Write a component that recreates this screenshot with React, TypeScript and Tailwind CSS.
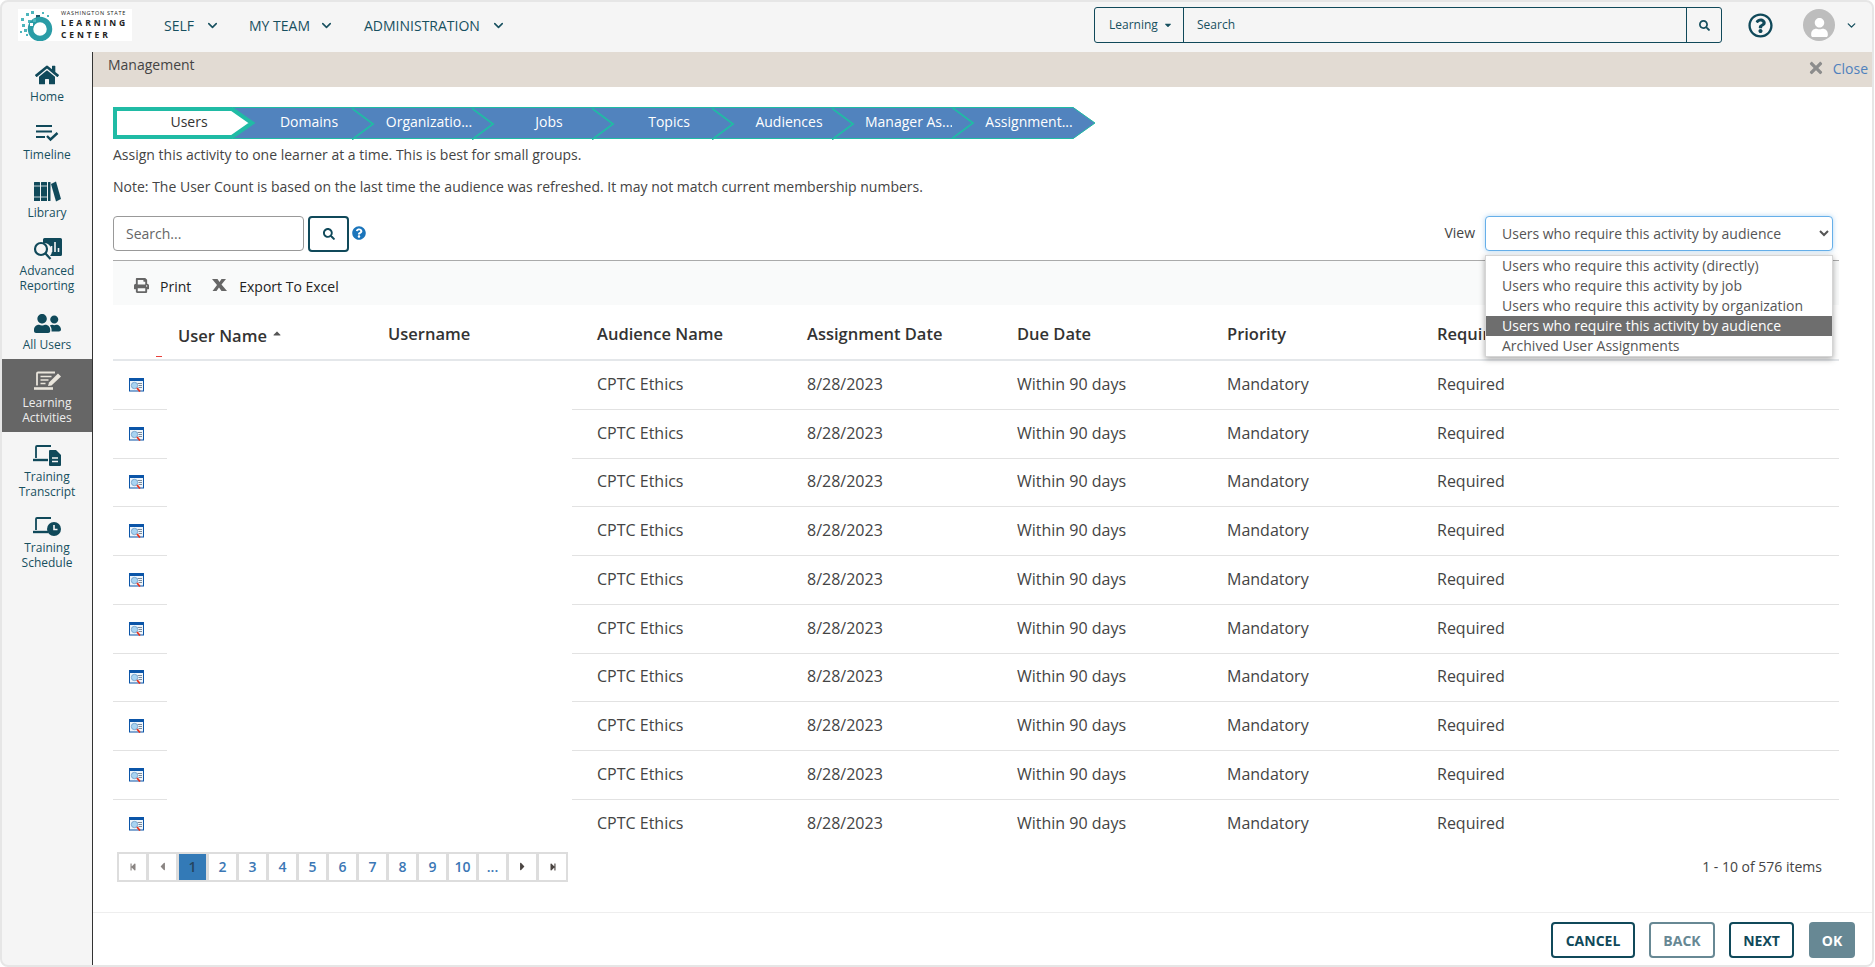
import { ReactNode } from "react";
import { ChevronDown } from "lucide-react";
import { FaCaretDown, FaCaretLeft, FaCaretRight, FaHome, FaPrint, FaQuestionCircle, FaRegQuestionCircle, FaSearch, FaStepBackward, FaStepForward, FaTimes, FaUser, FaUserFriends } from "react-icons/fa";

const DARK = "#10495a";

function LogoMark() {
    const dots = [[3, 9, 3], [8, 4, 3], [13, 2, 3], [18, 6, 4], [24, 3, 2], [29, 6, 2], [4, 15, 3], [10, 11, 3], [15, 11, 3], [2, 22, 2], [6, 20, 3], [11, 17, 3], [8, 25, 2]];
    return (
        <svg width="38" height="32" viewBox="0 0 38 32" className="shrink-0">
            {dots.map(([x, y, s], i) => (
                <rect key={i} x={x} y={y} width={s} height={s} fill={i === 3 ? "#1d5a6b" : "#4db6bd"} />
            ))}
            <circle cx="22" cy="20" r="9.5" fill="none" stroke="#2a9ca6" strokeWidth="5.500" />
            <rect x="12" y="14" width="3" height="3" fill="#ffffff" />
            <rect x="15" y="10" width="3" height="3" fill="#4db6bd" />
        </svg>
    );
}

function TimelineIcon() {
    return (
        <svg width="24" height="18" viewBox="0 0 24 18" fill="none" stroke={DARK} strokeWidth="2.2">
            <path d="M1 2h16M1 7.500h16M1 13h9" />
            <path d="M12 12l3.500 3.500L22.500 9" strokeWidth="2.400" />
        </svg>
    );
}

function LibraryIcon() {
    return (
        <svg width="28" height="21" viewBox="0 0 28 21" fill={DARK}>
            <rect x="1" y="1" width="6" height="19" rx="0.500" />
            <rect x="8" y="1" width="6" height="19" rx="0.500" />
            <rect x="15" y="1" width="2.500" height="19" rx="0.500" />
            <path d="M18 3l5-2.500 5 17.500-5 2.500z" />
            <path d="M1 5h6M8 5h6M1 16h6M8 16h6" stroke="#f5f5f5" strokeWidth="0.800" />
        </svg>
    );
}

function ReportingIcon() {
    return (
        <svg width="29" height="22" viewBox="0 0 29 22" fill="none">
            <path d="M10 1.500a1.500 1.500 0 011.500-1.500H27.500A1.500 1.500 0 0129 1.500v15a1.500 1.500 0 01-1.500 1.500H17a8 8 0 00-7-13z" fill={DARK} />
            <path d="M18.500 14V8M22 14V4M25.500 14v-4" stroke="#f5f5f5" strokeWidth="1.600" />
            <circle cx="8" cy="11" r="6" stroke={DARK} strokeWidth="2.200" />
            <path d="M12.500 15.500l5 5.500" stroke={DARK} strokeWidth="2.200" />
        </svg>
    );
}

function ActivitiesIcon() {
    const c = "#e9e5dc";
    return (
        <svg width="29" height="20" viewBox="0 0 29 20" fill="none" stroke={c}>
            <path d="M4 14.500V2.500a1 1 0 011-1h17" strokeWidth="1.800" />
            <path d="M1 17.500h19" strokeWidth="2.600" />
            <path d="M7.500 5.500h11M7.500 9h8M7.500 12.500h5" strokeWidth="1.600" />
            <path d="M15 15l1-3.500L25 2.500l3 3-9.500 9z" fill={c} stroke="none" />
        </svg>
    );
}

function TranscriptIcon() {
    return (
        <svg width="28" height="21" viewBox="0 0 28 21" fill="none" stroke={DARK}>
            <path d="M3 13V2a1 1 0 011-1h14" strokeWidth="1.800" />
            <path d="M0 15h15" strokeWidth="2.400" />
            <path d="M16 6a1 1 0 011-1h6l5 5v10a1 1 0 01-1 1H17a1 1 0 01-1-1z" fill={DARK} stroke="none" />
            <path d="M19 13h6M19 16.500h6" stroke="#f5f5f5" strokeWidth="1.400" />
        </svg>
    );
}

function ScheduleIcon() {
    return (
        <svg width="28" height="19" viewBox="0 0 28 19" fill="none" stroke={DARK}>
            <path d="M3 13V2a1 1 0 011-1h14" strokeWidth="1.800" />
            <path d="M0 15h15" strokeWidth="2.400" />
            <circle cx="21" cy="12" r="7" fill={DARK} stroke="none" />
            <path d="M21 8v4.500h3.500" stroke="#f5f5f5" strokeWidth="1.600" />
        </svg>
    );
}

function DetailsIcon() {
    return (
        <svg width="15" height="14" viewBox="0 0 15 14" className="block">
            <rect x="0.500" y="0.500" width="14" height="12.500" fill="#eef5fb" stroke="#0b55a8" />
            <rect x="0" y="0" width="15" height="3" fill="#0b55a8" />
            <path d="M8.500 5.500h4.500M9.500 7.500h3.500M9.500 9.500h3.500" stroke="#7c8a9a" strokeWidth="1" />
            <circle cx="5.500" cy="7.500" r="3.200" fill="#a9d4f2" stroke="#6f9cc6" strokeWidth="0.800" />
            <path d="M8 10l3 3.500" stroke="#e8321e" strokeWidth="1.800" />
        </svg>
    );
}

function ExcelIcon() {
    return (
        <svg width="15" height="12" viewBox="0 0 15 12" fill="#666666" className="block">
            <path d="M0 0h5.500l2 3 2-3H14L9.500 5.500 15 12H9.500L7 8.500 4.500 12H0.500l4.500-6z" />
        </svg>
    );
}

function NavItem({ icon, lines, className, active }: { icon: ReactNode; lines: string[]; className: string; active?: boolean }) {
    return (
        <div className={`flex flex-col items-center text-[12px] leading-[15px] ${active ? "bg-[#666666] text-[#eeeeee]" : "text-[#17505f]"} ${className}`}>
            <div className="flex h-6 items-center justify-center">{icon}</div>
            <div className="mt-[2px] text-center">
                {lines.map((l) => (
                    <div key={l}>{l}</div>
                ))}
            </div>
        </div>
    );
}

function StepLabel({ label }: { label: string }) {
    return <div className="relative z-[1] flex h-full items-center justify-center whitespace-nowrap pb-[3px] pl-[32px] text-[14px]">{label}</div>;
}

function StepSeam() {
    return (
        <svg width="24" height="32" viewBox="0 0 24 32" className="absolute left-[-1px] top-0 z-[1]">
            <path d="M0 0.500L21 16 0 31.500" fill="#5183be" stroke="#20bba5" strokeWidth="1.800" />
        </svg>
    );
}

function PageButton({ children, active, dim }: { children: ReactNode; active?: boolean; dim?: boolean }) {
    return (
        <div
            className={`-ml-px flex h-[30px] w-[31px] items-center justify-center border-2 border-[#dddddd] text-[14px] font-semibold first:ml-0 ${
                active ? "bg-[#337ab7] font-normal text-[#24455f]" : dim ? "text-[#8a8583]" : "text-[#3b77b5]"
            }`}
        >
            {children}
        </div>
    );
}

const COLS = "grid grid-cols-[54px_195px_210px_210px_210px_210px_210px_1fr]";

function Row({ last }: { last?: boolean }) {
    const line = last ? "" : "border-b border-[#e2e2e2]";
    const cell = `flex items-center pb-[2px] pl-[25px] ${line}`;
    return (
        <div className={`${COLS} h-[48.75px] text-[16px] text-[#444444]`}>
            <div className={`flex items-center pl-4 ${line}`}>
                <DetailsIcon />
            </div>
            <div />
            <div />
            <div className={cell}>CPTC Ethics</div>
            <div className={cell}>8/28/2023</div>
            <div className={cell}>Within 90 days</div>
            <div className={cell}>Mandatory</div>
            <div className={cell}>Required</div>
        </div>
    );
}

export default function App() {
    const views = [
        "Users who require this activity (directly)",
        "Users who require this activity by job",
        "Users who require this activity by organization",
        "Users who require this activity by audience",
        "Archived User Assignments",
    ];
    const steps = ["Domains", "Organizatio...", "Jobs", "Topics", "Audiences", "Manager As..."];

    return (
        <div className="h-[967px] w-full bg-white font-['Open_Sans',sans-serif]">
            <div className="flex h-full w-[1874px] flex-col overflow-hidden rounded-lg border-2 border-[#e6e6e6] bg-[#f5f5f5]">
                {/* top bar */}
                <div className="flex h-[50px] shrink-0 items-center pb-1 text-[#17505f]">
                    <div className="ml-[16px] flex h-8 w-[114px] shrink-0 items-center overflow-hidden bg-white">
                        <LogoMark />
                        <div className="ml-[5px] whitespace-nowrap text-[#222222]">
                            <div className="text-[5.5px] leading-[8px] tracking-[0.7px]">WASHINGTON STATE</div>
                            <div className="text-[8.5px] font-bold leading-[12px] tracking-[2.9px]">LEARNING</div>
                            <div className="text-[8.5px] font-bold leading-[12px] tracking-[2.9px]">CENTER</div>
                        </div>
                    </div>
                    <div className="ml-[32px] flex items-center text-[14px]">
                        <span>SELF</span>
                        <ChevronDown size={15} strokeWidth={2.5} className="ml-[11px]" />
                        <span className="ml-[29px]">MY TEAM</span>
                        <ChevronDown size={15} strokeWidth={2.5} className="ml-[9px]" />
                        <span className="ml-[30px]">ADMINISTRATION</span>
                        <ChevronDown size={15} strokeWidth={2.5} className="ml-[11px]" />
                    </div>
                    <div className="ml-auto flex h-[36px] w-[628px] items-center rounded-[3px] border border-[#10495a] text-[12px]">
                        <div className="flex h-full w-[89px] items-center border-r border-[#10495a] pl-[14px]">
                            Learning
                            <FaCaretDown size={10} className="ml-[5px]" />
                        </div>
                        <div className="flex-1 pl-[13px]">Search</div>
                        <div className="flex h-full w-[35px] items-center justify-center border-l border-[#10495a]">
                            <FaSearch size={11} />
                        </div>
                    </div>
                    <FaRegQuestionCircle size={25} className="ml-[26px] text-[#10495a]" />
                    <div className="ml-[30px] flex h-8 w-8 items-end justify-center overflow-hidden rounded-full bg-[#bdbdbd]">
                        <FaUser size={19} className="mb-[4px] text-white" />
                    </div>
                    <ChevronDown size={13} strokeWidth={2.5} className="ml-[10px] mr-[14px]" />
                </div>

                <div className="flex min-h-0 flex-1">
                    {/* left nav */}
                    <div className="flex w-[91px] shrink-0 flex-col border-r border-[#333333] pt-[11px]">
                        <NavItem icon={<FaHome size={24} color={DARK} />} lines={["Home"]} className="h-[58px]" />
                        <NavItem icon={<TimelineIcon />} lines={["Timeline"]} className="h-[58px]" />
                        <NavItem icon={<LibraryIcon />} lines={["Library"]} className="h-[58px]" />
                        <NavItem icon={<ReportingIcon />} lines={["Advanced", "Reporting"]} className="h-[74px]" />
                        <NavItem icon={<FaUserFriends size={27} color={DARK} />} lines={["All Users"]} className="h-[48px]" />
                        <NavItem icon={<ActivitiesIcon />} lines={["Learning", "Activities"]} className="h-[73px] pt-[10px]" active />
                        <NavItem icon={<TranscriptIcon />} lines={["Training", "Transcript"]} className="h-[73px] pt-[11px]" />
                        <NavItem icon={<ScheduleIcon />} lines={["Training", "Schedule"]} className="pt-[9px]" />
                    </div>

                    <div className="flex min-w-0 flex-1 flex-col bg-white">
                        {/* title strip */}
                        <div className="flex h-[35px] shrink-0 justify-between bg-[#e2dbd3] pl-[15px] pr-[4px] text-[14px] text-[#444444]">
                            <span className="mt-[2px]">Management</span>
                            <span className="mt-[6px] flex h-5 items-center text-[#4f81bd]">
                                <FaTimes size={18} className="mr-[8px] text-[#8c8c8c]" />
                                Close
                            </span>
                        </div>

                        <div className="flex-1 pl-[20px] pr-[33px]">
                            {/* wizard steps */}
                            <div className="mt-5 flex">
                                <div className="relative z-10 h-8 w-[120px] text-[#333333]">
                                    <svg width="144" height="32" viewBox="0 0 144 32" className="absolute left-0 top-0">
                                        <path d="M2 2H119L139 16 119 30H2z" fill="#ffffff" stroke="#20bba5" strokeWidth="4" />
                                    </svg>
                                    <StepLabel label="Users" />
                                </div>
                                {steps.map((s, i) => (
                                    <div key={s} className="relative h-8 w-[120px] border-y border-[#20bba5] bg-[#5183be] text-white">
                                        <StepLabel label={s} />
                                        {i > 0 && <StepSeam />}
                                    </div>
                                ))}
                                <div className="relative h-8 w-[120px] text-white">
                                    <svg width="144" height="32" viewBox="0 0 144 32" className="absolute left-0 top-0">
                                        <path d="M0 0H120L142 16 120 32H0z" fill="#5183be" />
                                        <path d="M0 0.500H120L142 16 120 31.500H0" fill="none" stroke="#20bba5" strokeWidth="1" />
                                    </svg>
                                    <StepSeam />
                                    <StepLabel label="Assignment..." />
                                </div>
                            </div>

                            <p className="mt-[6px] text-[14px] leading-5 text-[#444444]">Assign this activity to one learner at a time. This is best for small groups.</p>
                            <p className="mt-3 text-[14px] leading-5 text-[#444444]">Note: The User Count is based on the last time the audience was refreshed. It may not match current membership numbers.</p>

                            {/* filter row */}
                            <div className="mt-[19px] flex h-9 items-start">
                                <input placeholder="Search..." className="h-[35px] w-[191px] rounded-[4px] border border-[#999999] px-3 text-[14px] outline-none placeholder:text-[#666666]" />
                                <button className="ml-[4px] flex h-9 w-[41px] items-center justify-center rounded-[4px] border-2 border-[#10495a] text-[#10495a]">
                                    <FaSearch size={12} />
                                </button>
                                <FaQuestionCircle size={14} className="ml-[3px] mt-[10px] text-[#1b75bb]" />
                                <span className="ml-auto mt-[6px] text-[14px] text-[#444444]">View</span>
                                <div className="relative ml-[10px] mr-[6px] w-[348px]">
                                    <select defaultValue={views[3]} className="h-[35px] w-full rounded-[4px] border border-[#66afe9] bg-white pl-[12px] text-[14px] text-[#555555] shadow-[0_0_5px_rgba(102,175,233,0.5)] outline-none">
                                        {views.map((v) => (
                                            <option key={v}>{v}</option>
                                        ))}
                                    </select>
                                    <div className="absolute left-0 top-[39px] z-20 w-full border border-[#d5d5d5] bg-white text-[14px] leading-5 text-[#555555] shadow-[0_2px_6px_rgba(0,0,0,0.35)]">
                                        {views.map((v, i) => (
                                            <div key={v} className={`pl-[16px] ${i === 3 ? "bg-[#6e6e6e] text-white" : ""}`}>
                                                {v}
                                            </div>
                                        ))}
                                    </div>
                                </div>
                            </div>

                            {/* toolbar */}
                            <div className="mt-2 flex h-[45px] items-center border-t border-[#aaaaaa] bg-[#f9fafa] pl-[21px] pt-[7px] text-[14px] font-medium text-[#222222]">
                                <FaPrint size={15} className="-mt-[3px] text-[#666666]" />
                                <span className="ml-[11px]">Print</span>
                                <span className="-mt-[3px] ml-[21px]"><ExcelIcon /></span>
                                <span className="ml-[12px]">Export To Excel</span>
                            </div>

                            {/* grid header */}
                            <div className={`${COLS} h-[56px] border-b-2 border-[#e4e7ea] text-[16.5px] font-semibold text-[#333333]`}>
                                <div className="relative">
                                    <span className="absolute left-[43px] top-[51px] h-px w-[6px] bg-[#e8413b]" />
                                </div>
                                <div className="flex pl-[11px] pt-[19px]">
                                    User Name
                                    <FaCaretDown size={12} className="ml-[4px] mt-[4px] rotate-180 text-[#555555]" />
                                </div>
                                <div className="pl-[26px] pt-[17px]">Username</div>
                                <div className="pl-[25px] pt-[17px]">Audience Name</div>
                                <div className="pl-[25px] pt-[17px]">Assignment Date</div>
                                <div className="pl-[25px] pt-[17px]">Due Date</div>
                                <div className="pl-[25px] pt-[17px]">Priority</div>
                                <div className="pl-[25px] pt-[17px]">Required</div>
                            </div>

                            {Array.from({ length: 10 }).map((_, i) => (
                                <Row key={i} last={i === 9} />
                            ))}

                            {/* pager */}
                            <div className="mt-[3px] flex items-center pl-[4px]">
                                <div className="flex">
                                    <PageButton dim><FaStepBackward size={8} /></PageButton>
                                    <PageButton dim><FaCaretLeft size={13} /></PageButton>
                                    <PageButton active>1</PageButton>
                                    {["2", "3", "4", "5", "6", "7", "8", "9", "10", "..."].map((p) => (
                                        <PageButton key={p}>{p}</PageButton>
                                    ))}
                                    <PageButton><span className="text-[#4a4441]"><FaCaretRight size={13} /></span></PageButton>
                                    <PageButton><span className="text-[#4a4441]"><FaStepForward size={8} /></span></PageButton>
                                </div>
                                <span className="ml-auto mr-[17px] text-[14px] text-[#444444]">1 - 10 of 576 items</span>
                            </div>
                        </div>

                        {/* footer buttons */}
                        <div className="flex h-[53px] shrink-0 items-start justify-end border-t border-[#eeeeee] pr-[17px] pt-[9px] text-[14px] font-bold">
                            <button className="h-9 w-[84px] rounded-[4px] border-2 border-[#10495a] text-[#10495a]">CANCEL</button>
                            <button className="ml-[14px] h-9 w-[66px] rounded-[4px] border-2 border-[#678894] text-[#678894]">BACK</button>
                            <button className="ml-[14px] h-9 w-[65px] rounded-[4px] border-2 border-[#10495a] text-[#10495a]">NEXT</button>
                            <button className="ml-[15px] h-9 w-[46px] rounded-[4px] bg-[#678894] text-white">OK</button>
                        </div>
                    </div>
                </div>
            </div>
        </div>
    );
}
